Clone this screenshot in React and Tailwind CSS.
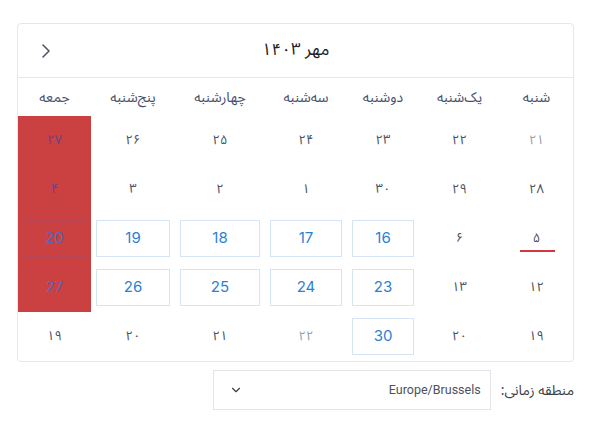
import { ChevronDown } from "lucide-react";

const FA = "font-['Noto_Sans_Arabic','DejaVu_Sans',sans-serif]";
const EN = "font-['Inter','Roboto',sans-serif]";

const weekdays = ["شنبه", "یک‌شنبه", "دوشنبه", "سه‌شنبه", "چهارشنبه", "پنج‌شنبه", "جمعه"];

// kind: f = persian number, b = boxed number, l = light persian, d = today
const rows = [
  [["۲۱", "l"], ["۲۲", "f"], ["۲۳", "f"], ["۲۴", "f"], ["۲۵", "f"], ["۲۶", "f"], ["۲۷", "f"]],
  [["۲۸", "f"], ["۲۹", "f"], ["۳۰", "f"], ["۱", "f"], ["۲", "f"], ["۳", "f"], ["۴", "f"]],
  [["۵", "d"], ["۶", "f"], ["16", "b"], ["17", "b"], ["18", "b"], ["19", "b"], ["20", "b"]],
  [["۱۲", "f"], ["۱۳", "f"], ["23", "b"], ["24", "b"], ["25", "b"], ["26", "b"], ["27", "b"]],
  [["۱۹", "f"], ["۲۰", "f"], ["30", "b"], ["۲۲", "l"], ["۲۱", "f"], ["۲۰", "f"], ["۱۹", "f"]],
];

const DayCell = ({ text, kind, red }) => {
  if (kind === "b") {
    return (
      <div className={`h-[49px] flex items-stretch py-[6px] px-[5px] ${red ? "bg-[#cb4040]" : ""}`}>
        <div
          className={`flex-1 flex items-center justify-center border text-[15px] ${EN} ${
            red ? "border-[#b5485a] text-[#5566c4]" : "border-[#d5e5f5] text-[#2b7fd6]"
          }`}
        >
          {text}
        </div>
      </div>
    );
  }
  return (
    <div className={`h-[49px] flex items-center justify-center relative ${red ? "bg-[#cb4040]" : ""}`}>
      <span
        className={`text-[13px] ${FA} ${
          red ? "text-[#5b4a8c]" : kind === "l" ? "text-[#9aa0ab]" : "text-[#4b5160]"
        }`}
      >
        {text}
      </span>
      {kind === "d" && <div className="absolute bottom-[11px] left-[20px] right-[18px] h-[2.5px] bg-[#d0383f]" />}
    </div>
  );
};

export default function App() {
  return (
    <div dir="rtl" className="bg-white min-h-[431px] pt-[23px] pl-[17px] pr-[19px]">
      <div className="border border-[#e5e7eb] rounded-[4px] overflow-hidden">
        <div className="h-[54px] border-b border-[#e5e7eb] flex items-center justify-between px-[24px]">
          <div className="w-[8px]" />
          <div className={`text-[17px] text-[#1b1e28] ${FA}`}>مهر ۱۴۰۳</div>
          <button className="w-[8px] h-[14px] flex items-center">
            <svg width="8" height="14" viewBox="0 0 8 14" fill="none">
              <path d="M1 1l6 6-6 6" stroke="#4b5068" strokeWidth="1.5" strokeLinecap="round" strokeLinejoin="round" />
            </svg>
          </button>
        </div>
        <div className="grid grid-cols-[73px_81px_72px_82px_90px_84px_1fr]">
          {weekdays.map((w) => (
            <div key={w} className={`h-[38px] flex items-center justify-center text-[14px] text-[#474f6b] ${FA}`}>
              {w}
            </div>
          ))}
          {rows.map((row, ri) =>
            row.map(([text, kind], ci) => (
              <DayCell key={`${ri}-${ci}`} text={text} kind={kind} red={ci === 6 && ri < 4} />
            ))
          )}
        </div>
      </div>
      <div className="flex items-center mt-[8px] gap-[10px]">
        <span className={`text-[14px] text-[#3b3f4a] ${FA}`}>منطقه زمانی:</span>
        <div className="w-[278px] h-[40px] border border-[#e3e5ea] flex items-center justify-between pr-[9px] pl-[15px]">
          <span className={`text-[12.5px] text-[#4b5160] font-['Roboto',sans-serif]`} dir="ltr">Europe/Brussels</span>
          <ChevronDown size={14} strokeWidth={2} className="text-[#3b3f4a]" />
        </div>
      </div>
    </div>
  );
}
